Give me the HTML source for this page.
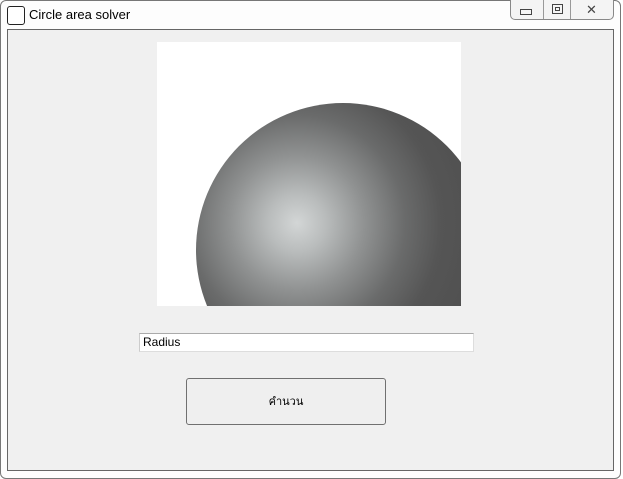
<!DOCTYPE html>
<html><head><meta charset="utf-8"><style>
html,body{margin:0;padding:0;width:623px;height:479px;overflow:hidden;background:#fff;font-family:"Liberation Sans",sans-serif}
.frame{position:absolute;left:0;top:0;width:619px;height:477px;border:1px solid #777;border-radius:6px;background:#fdfdfd}
.client{position:absolute;left:7px;top:29px;width:605px;height:440px;background:#f0f0f0;border:1px solid #666}
.title{position:absolute;left:29px;top:7px;font-size:13px;color:#000}
.ico{position:absolute;left:7px;top:6px;width:16px;height:17px;background:#fff;border:1px solid #222;border-radius:3px}
.btns{position:absolute;left:510px;top:0;width:102px;height:19px;border:1px solid #888;border-top:none;border-radius:0 0 5px 5px;background:#f4f4f4}
.btns div{position:absolute;top:0;height:19px;border-right:1px solid #999}
.img{position:absolute;left:157px;top:42px;width:304px;height:264px;background:#fff;overflow:hidden}
.sphere{position:absolute;left:39px;top:61px;width:294px;height:294px;border-radius:50%;background:radial-gradient(circle 240px at 101px 120px,#d3d6d6 0%,#b9bcbc 12%,#909292 28%,#6a6b6b 45%,#555 60%,#4a4a4a 100%)}
.tb{position:absolute;left:139px;top:333px;width:330px;height:17px;background:#fff;border:1px solid #bbb;border-color:#aaa #ddd #ddd #ccc;font-size:12px;line-height:17px;padding-left:3px;box-sizing:content-box}
.bt{position:absolute;left:186px;top:378px;width:198px;height:45px;border:1px solid #707070;border-radius:3px;background:#efefef;font-family:"Liberation Sans","DejaVu Sans",sans-serif;font-size:11px;text-align:center;line-height:47px}
</style></head><body>
<div class="frame"></div>
<div class="ico"></div>
<div class="title">Circle area solver</div>
<div class="btns">
 <div style="left:0;width:32px"><span style="position:absolute;left:9px;top:9px;width:10px;height:4px;border:1px solid #444"></span></div>
 <div style="left:33px;width:26px"><span style="position:absolute;left:8px;top:4px;width:9px;height:8px;border:1px solid #444"></span><span style="position:absolute;left:11px;top:7px;width:3px;height:2px;border:1px solid #444"></span></div>
 <div style="left:60px;width:41px;border:none;font-size:13px;color:#444;text-align:center;line-height:19px">✕</div>
</div>
<div class="client"></div>
<div class="img"><div class="sphere"></div></div>
<div class="tb">Radius</div>
<div class="bt">คำนวน</div>
</body></html>
